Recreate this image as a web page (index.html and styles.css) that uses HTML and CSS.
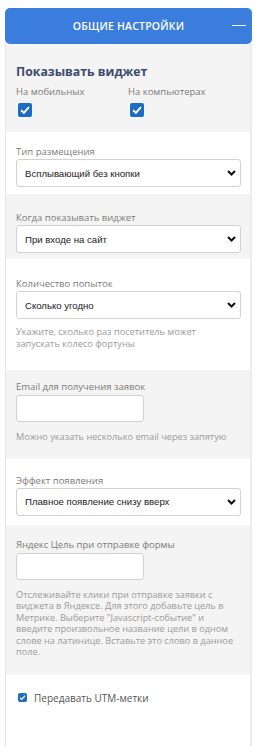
FILE: index.html
```html
<!DOCTYPE html>
<html lang="ru">

<head>
    <meta charset='utf-8'>
    <meta name="viewport" content="width=device-width,initial-scale=1" />
    <title>Общие настройки</title>
    <link rel="stylesheet" href="styles.css">
</head>

<body>
    <div class='panel'>
        <div class='head'>
            <span class='head-title'>Общие настройки</span>
            <span class='head-toggle'></span>
        </div>
        <div class='body'>
            <div class='sec gray s1'>
                <h3>Показывать виджет</h3>
                <div class='pair'>
                    <div class='col'>
                        <div class='lbl'>На мобильных</div>
                        <span class='chk'><svg viewBox='0 0 14 14'><path d='M3.2 7.2 L5.9 9.9 L10.9 4.2' /></svg></span>
                    </div>
                    <div class='col'>
                        <div class='lbl'>На компьютерах</div>
                        <span class='chk'><svg viewBox='0 0 14 14'><path d='M3.2 7.2 L5.9 9.9 L10.9 4.2' /></svg></span>
                    </div>
                </div>
            </div>
            <div class='sec s2'>
                <div class='lbl'>Тип размещения</div>
                <select class='sel'><option>Всплывающий без кнопки</option></select>
            </div>
            <div class='sec gray s3'>
                <div class='lbl'>Когда показывать виджет</div>
                <select class='sel'><option>При входе на сайт</option></select>
            </div>
            <div class='sec s4'>
                <div class='lbl'>Количество попыток</div>
                <select class='sel'><option>Сколько угодно</option></select>
                <p class='help'>Укажите, сколько раз посетитель может запускать колесо фортуны</p>
            </div>
            <div class='sec gray s5'>
                <div class='lbl'>Email для получения заявок</div>
                <input class='txt' type='text'>
                <p class='help'>Можно указать несколько email через запятую</p>
            </div>
            <div class='sec s6'>
                <div class='lbl'>Эффект появления</div>
                <select class='sel'><option>Плавное появление снизу вверх</option></select>
            </div>
            <div class='sec gray s7'>
                <div class='lbl'>Яндекс Цель при отправке формы</div>
                <input class='txt' type='text'>
                <p class='help'>Отслеживайте клики при отправке заявки с виджета в Яндексе. Для этого добавьте цель в Метрике. Выберите "Javascript-событие" и введите произвольное название цели в одном слове на латинице. Вставьте это слово в данное поле.</p>
            </div>
            <div class='sec s8'>
                <label class='utm'><span class='chk small'><svg viewBox='0 0 14 14'><path d='M3.2 7.2 L5.9 9.9 L10.9 4.2' /></svg></span>Передавать UTM-метки</label>
            </div>
        </div>
    </div>
</body>

</html>
```

FILE: styles.css
```css
body {
    margin: 0;
    padding: 8px 8px 0 5px;
    background: #fff;
    font-family: "Open Sans", Lato, sans-serif;
}

.panel {
    width: 247px;
}

.head {
    height: 36px;
    background-color: #3b7ddd;
    border-radius: 5px;
    display: flex;
    align-items: center;
    justify-content: center;
    position: relative;
}

.head-title {
    color: #fff;
    font-size: 10.5px;
    font-weight: 600;
    text-transform: uppercase;
    letter-spacing: 0.2px;
}

.head-toggle {
    position: absolute;
    right: 6px;
    top: 17px;
    width: 14px;
    height: 1.2px;
    background: #fff;
}

.body {
    border-left: 1px solid #e4e4e4;
    border-right: 2px solid #ececec;
}

.sec {
    padding: 14px 9px 7px 10px;
    background: #fff;
}

.gray {
    background: #f4f4f4;
}

h3 {
    margin: 0;
    font-size: 12.3px;
    line-height: 16px;
    font-weight: 700;
    color: #3c4b6c;
}

.lbl {
    font-size: 9.5px;
    line-height: 12px;
    color: #7a7a7a;
    margin-bottom: 1px;
}

.pair {
    display: flex;
    margin-top: 6px;
}

.col {
    width: 112px;
}

.col .lbl {
    margin-bottom: 5px;
}

.chk {
    display: block;
    width: 14px;
    height: 14px;
    margin-left: 2px;
    border-radius: 2px;
    background: #1b6ec4;
}

.chk svg {
    display: block;
    width: 14px;
    height: 14px;
}

.chk path {
    fill: none;
    stroke: #fff;
    stroke-width: 2;
}

.sel {
    display: block;
    width: 225px;
    height: 28px;
    margin: 0;
    padding: 0 0 0 8px;
    border: 1px solid #d2d2d2;
    border-radius: 3px;
    background: #fff url("data:image/svg+xml;utf8,<svg xmlns='http://www.w3.org/2000/svg' width='9' height='6' viewBox='0 0 9 6'><path d='M1 1 L4.5 4.5 L8 1' fill='none' stroke='%23111' stroke-width='2'/></svg>") no-repeat right 4px center;
    -webkit-appearance: none;
    appearance: none;
    font-family: "Liberation Sans", Arial, sans-serif;
    font-size: 9.6px;
    color: #1a1a1a;
}

.txt {
    display: block;
    width: 128px;
    height: 27px;
    margin: 0;
    padding: 0 6px;
    box-sizing: border-box;
    border: 1px solid #d2d2d2;
    border-radius: 3px;
    background: #fff;
}

.help {
    margin: 7px 0 0;
    font-size: 9.2px;
    line-height: 11.5px;
    color: #9a9a9a;
}

.s1 {
    padding-top: 20px;
    padding-bottom: 15px;
}

.s3 {
    padding-top: 18px;
    padding-bottom: 6px;
}

.s4 {
    padding-top: 19px;
    padding-bottom: 21px;
}

.s5 {
    padding-top: 11px;
    padding-bottom: 16px;
}

.s5 .txt {
    margin-top: 2px;
}

.s5 .help {
    margin-top: 9px;
}

.s6 {
    padding-top: 16px;
    padding-bottom: 9px;
}

.s7 {
    padding-top: 14px;
    padding-bottom: 17px;
}

.s7 .txt {
    margin-top: 2px;
}

.s7 .help {
    margin-top: 9px;
}

.s8 {
    padding-top: 16px;
    height: 60px;
}

.utm {
    display: flex;
    align-items: center;
    font-size: 10px;
    color: #555;
}

.chk.small {
    width: 9px;
    height: 9px;
    margin: 0 7px 0 2px;
}

.chk.small svg {
    width: 9px;
    height: 9px;
}
```
